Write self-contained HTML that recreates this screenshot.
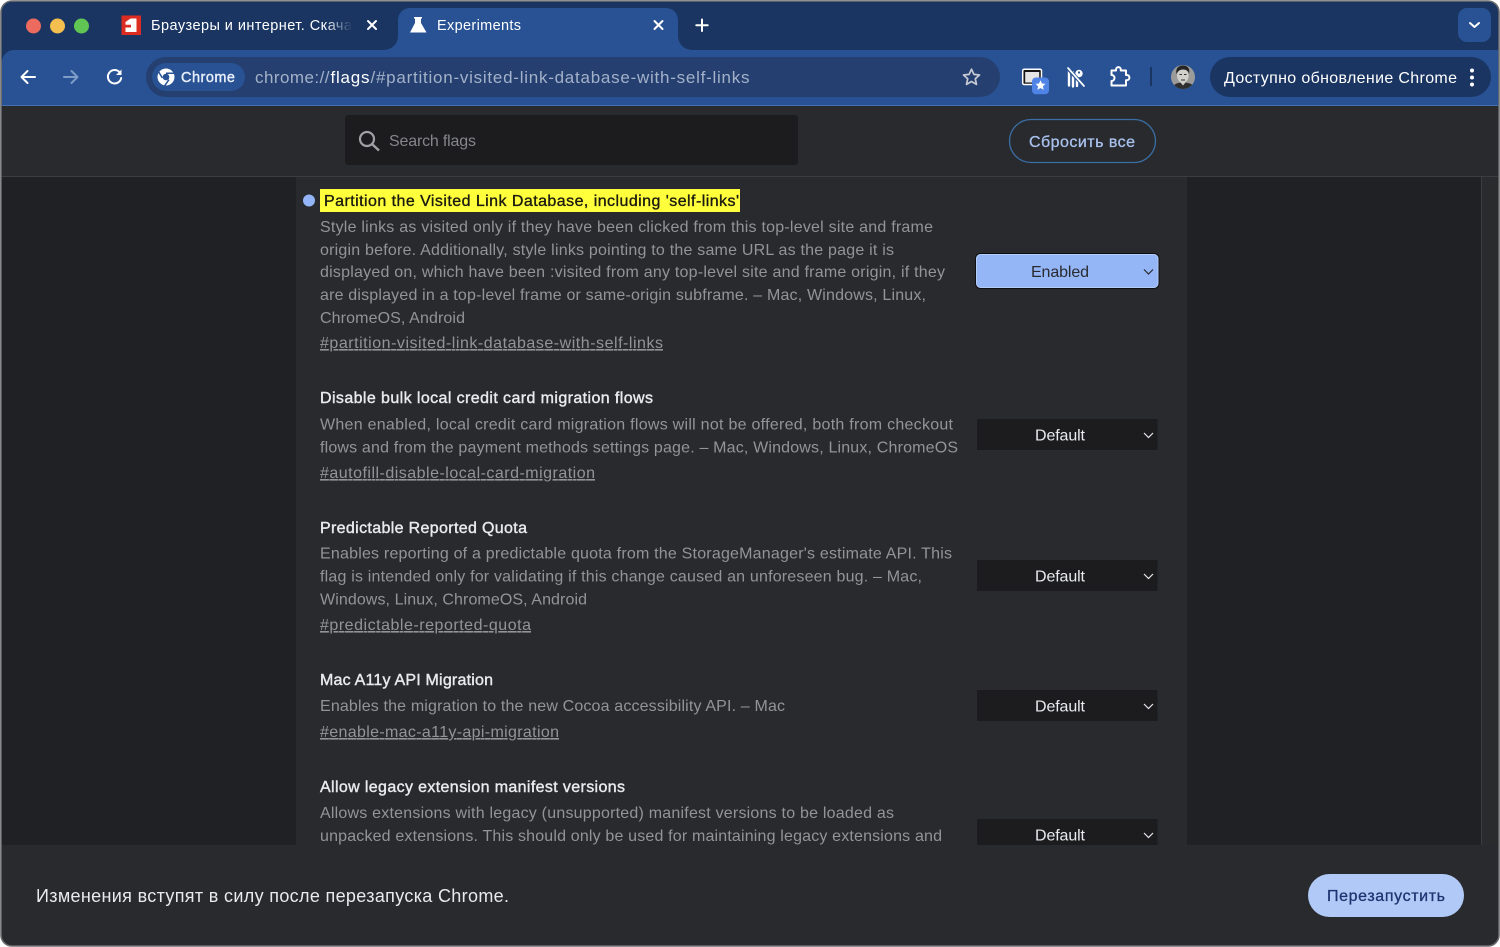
<!DOCTYPE html>
<html><head><meta charset="utf-8"><title>Experiments</title>
<style>
html,body{margin:0;padding:0;background:#fff;width:1500px;height:947px;overflow:hidden}
svg{display:block}
text{font-family:"Liberation Sans",sans-serif;font-size:16px;white-space:pre}
.d{fill:#929498}
.l{fill:#929498;text-decoration:underline}
.t{fill:#e8eaed;stroke:#e8eaed;stroke-width:.4}
.s{fill:#1c1c1e}
.v{fill:#e8eaed}
.c{fill:none;stroke:#e8eaed;stroke-width:1.2}
.i{fill:none;stroke:#fff;stroke-width:2;stroke-linecap:round;stroke-linejoin:round}
</style></head><body>
<svg width="1500" height="947" viewBox="0 0 1500 947" xmlns="http://www.w3.org/2000/svg">
<defs>
<linearGradient id="fade" gradientUnits="userSpaceOnUse" x1="325" y1="0" x2="352" y2="0"><stop offset="0" stop-color="#fff"/><stop offset="1" stop-color="#fff" stop-opacity="0"/></linearGradient>
<clipPath id="win"><rect x="1" y="1" width="1498" height="945" rx="11"/></clipPath>
<clipPath id="av"><circle cx="1183" cy="77" r="12"/></clipPath>
</defs>
<rect x="0.5" y="0.5" width="1499" height="946" rx="12" fill="#6b6c6e"/>
<g clip-path="url(#win)">
<!-- tab strip -->
<rect x="0" y="0" width="1500" height="60" fill="#1a3562"/>
<rect x="0" y="0" width="1500" height="1.6" fill="#77787a"/>
<!-- toolbar -->
<path d="M2 106V62a12 12 0 0 1 12-12H1500V106Z" fill="#285293"/>
<rect x="0" y="105" width="1500" height="1.2" fill="#4470ae"/>
<!-- active tab -->
<path d="M384 50a14 14 0 0 0 14-14V20a12 12 0 0 1 12-12H666a12 12 0 0 1 12 12V36a14 14 0 0 0 14 14Z" fill="#285293"/>
<!-- traffic -->
<circle cx="33.5" cy="26" r="7.5" fill="#ec6a5e"/>
<circle cx="57.5" cy="26" r="7.5" fill="#f4bf4f"/>
<circle cx="81.5" cy="26" r="7.5" fill="#61c554"/>
<!-- favicon -->
<rect x="121.5" y="15.5" width="19.5" height="19.5" fill="#dc2b20"/>
<path d="M130.500 18.500H136.500V32H125.500V27.500H131V24.800H125.500V22Z" fill="#fff"/>
<text x="151" y="30" fill="url(#fade)" style="font-size:14.5px" textLength="201" lengthAdjust="spacing">Браузеры и интернет. Скача</text>
<path d="M368 21l8 8M376 21l-8 8" class="i"/>
<!-- flask -->
<path d="M414 17h8v1.5h-1V23l5.500 9.500H410L415 23v-4.500h-1Z" fill="#fff"/>
<text x="437" y="30" style="font-size:14.5px" fill="#fff" textLength="84" lengthAdjust="spacing">Experiments</text>
<path d="M654.500 21l8 8M662.500 21l-8 8" class="i"/>
<path d="M702 19.500v11.500M696.300 25.200h11.400" class="i"/>
<rect x="1458" y="8" width="33" height="34" rx="9" fill="#285293"/>
<path d="M1470 23l4.500 4 4.500-4" class="i"/>
<!-- nav -->
<path d="M35 77H22M27.500 71l-6 6 6 6" class="i"/>
<path d="M64 77H77M71.500 71l6 6-6 6" class="i" style="stroke:#7f9bc7"/>
<path d="M119.800 72.500a6.700 6.700 0 1 0 1.400 5.500" class="i"/>
<path d="M121.500 69.500v5.500h-5.500Z" fill="#fff"/>
<!-- omnibox -->
<rect x="146" y="57" width="854" height="40" rx="20" fill="#254070"/>
<rect x="152" y="63" width="93" height="28" rx="14" fill="#285293"/>
<circle cx="166" cy="77" r="8.5" fill="#fff"/>
<circle cx="166" cy="77" r="3.3" fill="#285293"/>
<path d="M166 73.200h8M162.400 78l-4-6.500M168.900 79.700l-4.200 6" stroke="#285293" stroke-width="1.500" fill="none"/>
<text x="181" y="82" style="font-size:14.5px" fill="#e8eefa" stroke="#e8eefa" stroke-width=".4" textLength="54" lengthAdjust="spacing">Chrome</text>
<text x="255" y="83" style="font-size:17px" fill="#a3b1c9" textLength="74.500" lengthAdjust="spacing">chrome://</text>
<text x="330.500" y="83" style="font-size:17px" fill="#fff" textLength="39" lengthAdjust="spacing">flags</text>
<text x="370.500" y="83" style="font-size:17px" fill="#a3b1c9" textLength="379" lengthAdjust="spacing">/#partition-visited-link-database-with-self-links</text>
<path d="M971.500 69.200l2.400 5.200 5.600.6-4.200 3.800 1.200 5.600-5-2.900-5 2.900 1.200-5.600-4.200-3.800 5.600-.6Z" fill="none" stroke="#c6cad2" stroke-width="1.700" stroke-linejoin="round"/>
<!-- tab search icon -->
<rect x="1022.700" y="69.200" width="18.800" height="15.300" rx="1.500" fill="#151515" stroke="#fff" stroke-width="1.500"/>
<rect x="1025.200" y="72" width="14" height="10.500" fill="#e4e4e4"/>
<rect x="1032" y="77.500" width="17" height="16.800" rx="4" fill="#4f84e6"/>
<path d="M1040.500 80.300l1.500 3.200 3.500.4-2.600 2.400.7 3.500-3.100-1.800-3.100 1.800.7-3.500-2.600-2.400 3.500-.4Z" fill="#fff"/>
<!-- password slashed icon -->
<g fill="none" stroke-linecap="round">
<path d="M1069 71v14.500M1073 72.500v14M1077 77v9" stroke="#fff" stroke-width="2.400"/>
<circle cx="1079" cy="73.500" r="3.700" fill="#fff"/>
<circle cx="1079" cy="72.500" r="1.100" fill="#285293"/>
<path d="M1067 67.500l17 18.500" stroke="#285293" stroke-width="3.600"/>
<path d="M1068 68l16 18" stroke="#fff" stroke-width="1.700"/>
</g>
<!-- extensions -->
<path d="M1111.500 70.500h4.500v-1a2.400 2.400 0 0 1 4.800 0v1h5.200v4.500h.8a2.600 2.600 0 0 1 0 5.200h-.8v5.300h-14.500v-4.500a3 3 0 0 0 0-6Z" class="i"/>
<rect x="1150" y="67" width="2" height="19" fill="#1a3562"/>
<!-- avatar -->
<g clip-path="url(#av)">
<rect x="1171" y="65" width="24" height="24" fill="#9b9b99"/>
<path d="M1173 89c0-5 4-6.500 10-6.500s11 1.500 11 6.500Z" fill="#2f2f2f"/>
<path d="M1180.500 82.500l2.500 3 2.500-3v-2h-5Z" fill="#d0cec9"/>
<ellipse cx="1182.800" cy="75.500" rx="5.800" ry="7.500" fill="#d2d0cb"/>
<path d="M1176.500 74c-1.200-6 2.500-8.500 6.500-8.500s7.500 2.500 6 8.500c-.5-3-3-4.500-6-4.500s-5 1.500-6.500 4.500Z" fill="#252525"/>
<path d="M1179.500 74.500h2.500M1184 74.500h2.500M1181 80h4" stroke="#333" stroke-width="1" fill="none"/>
</g>
<!-- update pill -->
<rect x="1210" y="57" width="281" height="40" rx="20" fill="#1a3562"/>
<text x="1224" y="83" style="font-size:16px" fill="#fff" textLength="233" lengthAdjust="spacing">Доступно обновление Chrome</text>
<circle cx="1472" cy="70.5" r="2" fill="#fff"/><circle cx="1472" cy="77.5" r="2" fill="#fff"/><circle cx="1472" cy="84.5" r="2" fill="#fff"/>

<!-- page -->
<rect x="0" y="106" width="1500" height="841" fill="#202124"/>
<rect x="296" y="177" width="891" height="668" fill="#292a2d"/>
<rect x="1481" y="177" width="19" height="668" fill="#2a2b2d"/>
<rect x="1481" y="177" width="1" height="668" fill="#3c3d40"/>
<rect x="0" y="106" width="1500" height="70" fill="#292a2d"/>
<rect x="0" y="176" width="1500" height="1" fill="#3c3d40"/>
<rect x="345" y="115" width="453" height="50" rx="3" fill="#1c1c1e"/>
<circle cx="367" cy="139" r="7" fill="none" stroke="#a0a1a4" stroke-width="2.200"/>
<path d="M372.500 144.500l6.500 6" stroke="#a0a1a4" stroke-width="2.400" fill="none"/>
<text x="389" y="146" fill="#85868a" textLength="87" lengthAdjust="spacing">Search flags</text>
<rect x="1009.5" y="119.5" width="146" height="43" rx="21.5" fill="none" stroke="#3a6ea5" stroke-width="1.300"/>
<text x="1029" y="147" fill="#a8c0ec" stroke="#a8c0ec" stroke-width=".3" textLength="106" lengthAdjust="spacing">Сбросить все</text>

<!-- flag 1 -->
<circle cx="309" cy="200.500" r="6" fill="#93b5f8"/>
<rect x="320" y="189" width="420" height="23" fill="#ffff3b"/>
<text x="324" y="206" fill="#1a1a10" stroke="#1a1a10" stroke-width=".35" textLength="415" lengthAdjust="spacing">Partition the Visited Link Database, including 'self-links'</text>
<text class="d" x="320" y="232" textLength="613" lengthAdjust="spacing">Style links as visited only if they have been clicked from this top-level site and frame</text>
<text class="d" x="320" y="255" textLength="574" lengthAdjust="spacing">origin before. Additionally, style links pointing to the same URL as the page it is</text>
<text class="d" x="320" y="277" textLength="625" lengthAdjust="spacing">displayed on, which have been :visited from any top-level site and frame origin, if they</text>
<text class="d" x="320" y="300" textLength="606" lengthAdjust="spacing">are displayed in a top-level frame or same-origin subframe. – Mac, Windows, Linux,</text>
<text class="d" x="320" y="323" textLength="145" lengthAdjust="spacing">ChromeOS, Android</text>
<text class="l" x="320" y="348" textLength="343" lengthAdjust="spacing">#partition-visited-link-database-with-self-links</text>
<rect x="975" y="253" width="184.500" height="36" rx="5.500" fill="#0f0f10"/>
<rect x="976.5" y="254.5" width="181.500" height="33" rx="4" fill="#94b6f6" stroke="#b5cdfa" stroke-width="1"/>
<text x="1031" y="277" fill="#292a2d" textLength="58" lengthAdjust="spacing">Enabled</text>
<path d="M1144 269.500l4.500 4.500 4.500-4.500" fill="none" stroke="#292a2d" stroke-width="1.200"/>

<!-- flag 2 -->
<text class="t" x="320" y="403" textLength="333" lengthAdjust="spacing">Disable bulk local credit card migration flows</text>
<text class="d" x="320" y="429.500" textLength="633" lengthAdjust="spacing">When enabled, local credit card migration flows will not be offered, both from checkout</text>
<text class="d" x="320" y="452.500" textLength="638" lengthAdjust="spacing">flows and from the payment methods settings page. – Mac, Windows, Linux, ChromeOS</text>
<text class="l" x="320" y="478" textLength="275" lengthAdjust="spacing">#autofill-disable-local-card-migration</text>
<rect class="s" x="977" y="419" width="180.500" height="31"/>
<text class="v" x="1035" y="440.500" textLength="50" lengthAdjust="spacing">Default</text>
<path class="c" d="M1144 433l4.500 4.500 4.500-4.500"/>

<!-- flag 3 -->
<text class="t" x="320" y="533" textLength="207" lengthAdjust="spacing">Predictable Reported Quota</text>
<text class="d" x="320" y="558.500" textLength="632" lengthAdjust="spacing">Enables reporting of a predictable quota from the StorageManager's estimate API. This</text>
<text class="d" x="320" y="581.500" textLength="602" lengthAdjust="spacing">flag is intended only for validating if this change caused an unforeseen bug. – Mac,</text>
<text class="d" x="320" y="604.500" textLength="267" lengthAdjust="spacing">Windows, Linux, ChromeOS, Android</text>
<text class="l" x="320" y="630" textLength="211" lengthAdjust="spacing">#predictable-reported-quota</text>
<rect class="s" x="977" y="560" width="180.500" height="31"/>
<text class="v" x="1035" y="581.500" textLength="50" lengthAdjust="spacing">Default</text>
<path class="c" d="M1144 574l4.500 4.500 4.500-4.500"/>

<!-- flag 4 -->
<text class="t" x="320" y="685" textLength="173" lengthAdjust="spacing">Mac A11y API Migration</text>
<text class="d" x="320" y="711" textLength="465" lengthAdjust="spacing">Enables the migration to the new Cocoa accessibility API. – Mac</text>
<text class="l" x="320" y="737" textLength="239" lengthAdjust="spacing">#enable-mac-a11y-api-migration</text>
<rect class="s" x="977" y="690" width="180.500" height="31"/>
<text class="v" x="1035" y="711.500" textLength="50" lengthAdjust="spacing">Default</text>
<path class="c" d="M1144 704l4.500 4.500 4.500-4.500"/>

<!-- flag 5 -->
<text class="t" x="320" y="792" textLength="305" lengthAdjust="spacing">Allow legacy extension manifest versions</text>
<text class="d" x="320" y="818" textLength="574" lengthAdjust="spacing">Allows extensions with legacy (unsupported) manifest versions to be loaded as</text>
<text class="d" x="320" y="841" textLength="622" lengthAdjust="spacing">unpacked extensions. This should only be used for maintaining legacy extensions and</text>
<rect class="s" x="977" y="819" width="180.500" height="31"/>
<text class="v" x="1035" y="840.500" textLength="50" lengthAdjust="spacing">Default</text>
<path class="c" d="M1144 833l4.500 4.500 4.500-4.500"/>

<!-- bottom bar -->
<rect x="0" y="845" width="1500" height="102" fill="#292a2d"/>
<text x="36" y="902" style="font-size:18px" fill="#e8eaed" textLength="473" lengthAdjust="spacing">Изменения вступят в силу после перезапуска Chrome.</text>
<rect x="1308" y="874" width="156" height="43" rx="21.5" fill="#b0c9f7"/>
<text x="1327" y="901" fill="#1d3570" stroke="#1d3570" stroke-width=".3" textLength="118" lengthAdjust="spacing">Перезапустить</text>
</g>
<rect x="1" y="1" width="1498" height="945" rx="11" fill="none" stroke="#6b6c6e" stroke-width="1.600"/>
</svg>
</body></html>
